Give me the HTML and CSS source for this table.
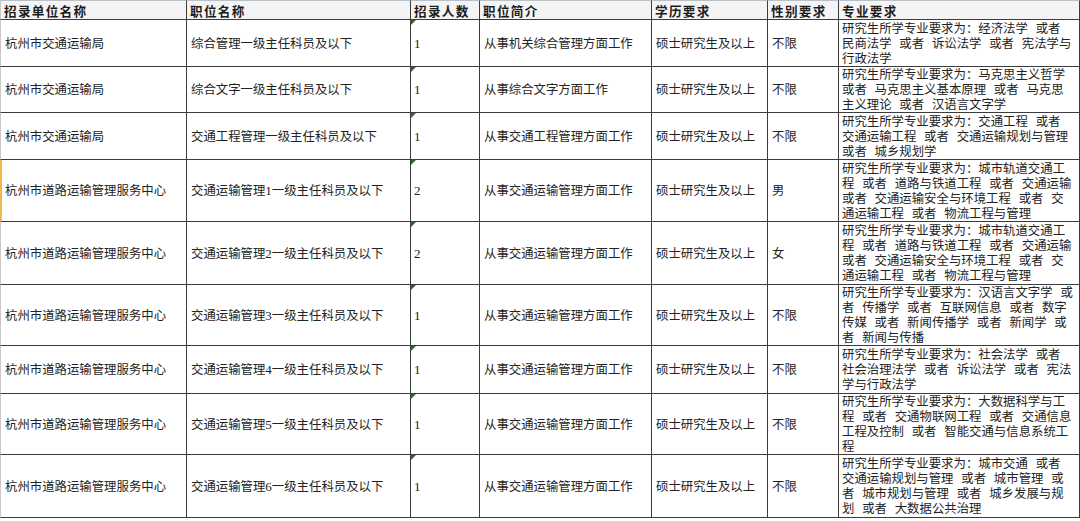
FILE: index.html
```html
<!DOCTYPE html>
<html lang="zh-CN">
<head>
<meta charset="utf-8">
<title>招录职位表</title>
<link rel="stylesheet" href="styles.css">
</head>
<body>
<div class="sheet">
  <div class="cell hd first">招录单位名称</div>
  <div class="cell hd">职位名称</div>
  <div class="cell hd">招录人数</div>
  <div class="cell hd">职位简介</div>
  <div class="cell hd">学历要求</div>
  <div class="cell hd">性别要求</div>
  <div class="cell hd">专业要求</div>

  <div class="cell first">杭州市交通运输局</div>
  <div class="cell">综合管理一级主任科员及以下</div>
  <div class="cell num">1</div>
  <div class="cell">从事机关综合管理方面工作</div>
  <div class="cell">硕士研究生及以上</div>
  <div class="cell">不限</div>
  <div class="cell major"><span>研究生所学专业要求为：经济法学 或者</span><span>民商法学 或者 诉讼法学 或者 宪法学与</span><span>行政法学</span></div>

  <div class="cell first">杭州市交通运输局</div>
  <div class="cell">综合文字一级主任科员及以下</div>
  <div class="cell num">1</div>
  <div class="cell">从事综合文字方面工作</div>
  <div class="cell">硕士研究生及以上</div>
  <div class="cell">不限</div>
  <div class="cell major"><span>研究生所学专业要求为：马克思主义哲学</span><span>或者 马克思主义基本原理 或者 马克思</span><span>主义理论 或者 汉语言文字学</span></div>

  <div class="cell first">杭州市交通运输局</div>
  <div class="cell">交通工程管理一级主任科员及以下</div>
  <div class="cell num">1</div>
  <div class="cell">从事交通工程管理方面工作</div>
  <div class="cell">硕士研究生及以上</div>
  <div class="cell">不限</div>
  <div class="cell major"><span>研究生所学专业要求为：交通工程 或者</span><span>交通运输工程 或者 交通运输规划与管理</span><span>或者 城乡规划学</span></div>

  <div class="cell first marked">杭州市道路运输管理服务中心</div>
  <div class="cell">交通运输管理<span class="digit">1</span>一级主任科员及以下</div>
  <div class="cell num">2</div>
  <div class="cell">从事交通运输管理方面工作</div>
  <div class="cell">硕士研究生及以上</div>
  <div class="cell">男</div>
  <div class="cell major"><span>研究生所学专业要求为：城市轨道交通工</span><span>程 或者 道路与铁道工程 或者 交通运输</span><span>或者 交通运输安全与环境工程 或者 交</span><span>通运输工程 或者 物流工程与管理</span></div>

  <div class="cell first">杭州市道路运输管理服务中心</div>
  <div class="cell">交通运输管理<span class="digit">2</span>一级主任科员及以下</div>
  <div class="cell num">2</div>
  <div class="cell">从事交通运输管理方面工作</div>
  <div class="cell">硕士研究生及以上</div>
  <div class="cell">女</div>
  <div class="cell major"><span>研究生所学专业要求为：城市轨道交通工</span><span>程 或者 道路与铁道工程 或者 交通运输</span><span>或者 交通运输安全与环境工程 或者 交</span><span>通运输工程 或者 物流工程与管理</span></div>

  <div class="cell first">杭州市道路运输管理服务中心</div>
  <div class="cell">交通运输管理<span class="digit">3</span>一级主任科员及以下</div>
  <div class="cell num">1</div>
  <div class="cell">从事交通运输管理方面工作</div>
  <div class="cell">硕士研究生及以上</div>
  <div class="cell">不限</div>
  <div class="cell major"><span>研究生所学专业要求为：汉语言文字学 或</span><span>者 传播学 或者 互联网信息 或者 数字</span><span>传媒 或者 新闻传播学 或者 新闻学 或</span><span>者 新闻与传播</span></div>

  <div class="cell first">杭州市道路运输管理服务中心</div>
  <div class="cell">交通运输管理<span class="digit">4</span>一级主任科员及以下</div>
  <div class="cell num">1</div>
  <div class="cell">从事交通运输管理方面工作</div>
  <div class="cell">硕士研究生及以上</div>
  <div class="cell">不限</div>
  <div class="cell major"><span>研究生所学专业要求为：社会法学 或者</span><span>社会治理法学 或者 诉讼法学 或者 宪法</span><span>学与行政法学</span></div>

  <div class="cell first">杭州市道路运输管理服务中心</div>
  <div class="cell">交通运输管理<span class="digit">5</span>一级主任科员及以下</div>
  <div class="cell num">1</div>
  <div class="cell">从事交通运输管理方面工作</div>
  <div class="cell">硕士研究生及以上</div>
  <div class="cell">不限</div>
  <div class="cell major"><span>研究生所学专业要求为：大数据科学与工</span><span>程 或者 交通物联网工程 或者 交通信息</span><span>工程及控制 或者 智能交通与信息系统工</span><span>程</span></div>

  <div class="cell first">杭州市道路运输管理服务中心</div>
  <div class="cell">交通运输管理<span class="digit">6</span>一级主任科员及以下</div>
  <div class="cell num">1</div>
  <div class="cell">从事交通运输管理方面工作</div>
  <div class="cell">硕士研究生及以上</div>
  <div class="cell">不限</div>
  <div class="cell major"><span>研究生所学专业要求为：城市交通 或者</span><span>交通运输规划与管理 或者 城市管理 或</span><span>者 城市规划与管理 或者 城乡发展与规</span><span>划 或者 大数据公共治理</span></div>
</div>
</body>
</html>
```

FILE: styles.css
```css
html, body {
  margin: 0;
  padding: 0;
  background: #ffffff;
}

body {
  font-family: "Noto Sans CJK SC", "Noto Sans", sans-serif;
  color: #232323;
  font-size: 12.4px;
}

.sheet {
  display: grid;
  grid-template-columns: 187px 224px 69px 172px 116px 71px 241px;
  grid-template-rows: 20px 47px 46px 47px 62px 63px 61px 48px 61px 63px;
  width: 1080px;
}

.cell {
  box-sizing: border-box;
  display: flex;
  align-items: center;
  padding-left: 4px;
  border-right: 1px solid #3c3c3c;
  border-bottom: 1px solid #3c3c3c;
  white-space: nowrap;
  overflow: hidden;
  position: relative;
  line-height: 15px;
}

.first {
  border-left: 1px solid #c9c9c9;
  padding-left: 4px;
}

.marked {
  border-left: 2px solid #f0b84e;
  padding-left: 3px;
}

.hd {
  background: #f4f4f4;
  border-top: 1px solid #b9c0c8;
  font-weight: bold;
  font-size: 12.6px;
  letter-spacing: 1.3px;
  color: #1c1c1c;
  padding-left: 3px;
}

.num {
  font-family: "Liberation Serif", "Times New Roman", serif;
  font-size: 13px;
  padding-left: 3px;
}

.num::before {
  content: "";
  position: absolute;
  left: 0;
  top: 0;
  width: 0;
  height: 0;
  border-top: 5px solid #2f6a2a;
  border-right: 5px solid transparent;
}

.digit {
  font-family: "Liberation Serif", "Times New Roman", serif;
  font-size: 13px;
}

.major {
  flex-direction: column;
  align-items: flex-start;
  justify-content: center;
  padding-left: 3px;
  line-height: 15px;
  word-spacing: 5px;
}

.major span {
  display: block;
  height: 15px;
  white-space: nowrap;
}
```
